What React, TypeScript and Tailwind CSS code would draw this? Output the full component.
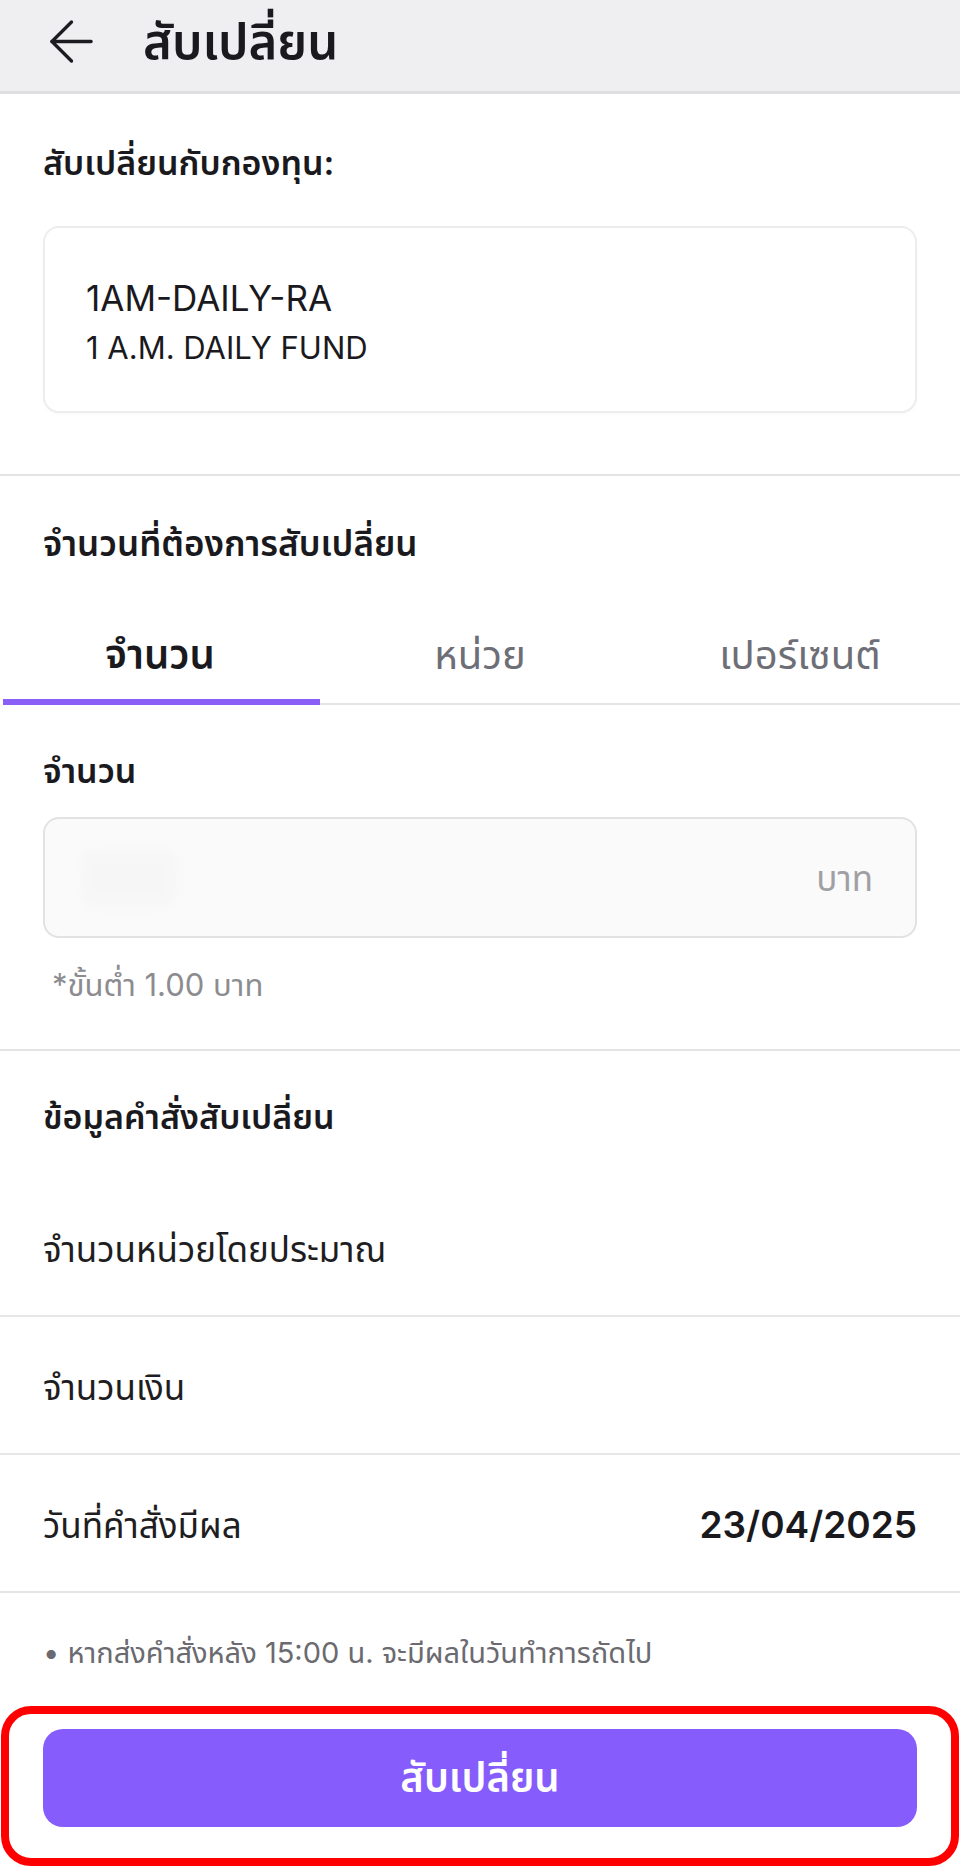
import React from "react";

const FONT = { fontFamily: '"Inter", "Noto Sans Thai", "Noto Sans", "DejaVu Sans", sans-serif' };

function Row({ label, value }: { label: string; value?: string }) {
  return (
    <div className="flex h-[138px] items-center justify-between border-b-2 border-[#e6e6e8] px-[43px] pt-1">
      <span className="text-[35px] leading-[50px] text-[#1e1e22]">{label}</span>
      {value ? (
        <span className="text-[37px] font-semibold leading-[50px] text-[#1a1a1e]">{value}</span>
      ) : null}
    </div>
  );
}

export default function App() {
  const tabs = ["จำนวน", "หน่วย", "เปอร์เซนต์"];
  return (
    <div className="h-[1868px] w-[960px] overflow-hidden bg-white" style={FONT}>
      {/* Header */}
      <div className="flex h-[94px] items-center border-b-[3px] border-[#dfdfe2] bg-[#efeff2] pb-[8px]">
        <svg
          className="ml-[38px] shrink-0"
          width="67"
          height="67"
          viewBox="0 0 24 24"
          fill="none"
          stroke="#1c1c20"
          strokeWidth="1.2"
          strokeLinecap="round"
          strokeLinejoin="round"
        >
          <path d="m12 19-7-7 7-7" />
          <path d="M19 12H5" />
        </svg>
        <h1 className="ml-[38px] text-[49px] font-semibold leading-[60px] text-[#1a1a1e]">สับเปลี่ยน</h1>
      </div>

      {/* Section 1 */}
      <div className="px-[43px]">
        <p className="mt-[44px] text-[34px] font-semibold leading-[50px] text-[#1a1a1e]">สับเปลี่ยนกับกองทุน:</p>
        <div className="mt-[38px] h-[187px] rounded-[16px] border-2 border-[#ededef] bg-white px-[41px] pt-[45px] shadow-[0_1px_3px_rgba(0,0,0,0.03)]">
          <p className="text-[35px] leading-[50px] text-[#1a1a1e]">1AM-DAILY-RA</p>
          <p className="text-[31px] leading-[50px] text-[#1a1a1e]">1 A.M. DAILY FUND</p>
        </div>
        <div className="h-[61px]" />
      </div>
      <div className="h-[2px] bg-[#e4e4e6]" />

      {/* Section 2 */}
      <p className="mt-[42px] px-[43px] text-[35px] font-semibold leading-[50px] text-[#1a1a1e]">
        จำนวนที่ต้องการสับเปลี่ยน
      </p>
      <div className="mt-[42px] grid grid-cols-3">
        {tabs.map((t, i) => (
          <div key={t} className="flex flex-col">
            <div className="flex h-[89px] items-center justify-center">
              <span
                className={
                  i === 0
                    ? "text-[40px] font-semibold leading-[56px] text-[#1a1a1e]"
                    : "text-[40px] leading-[56px] text-[#6e6e76]"
                }
              >
                {t}
              </span>
            </div>
            {i === 0 ? (
              <div className="ml-[3px] h-[6px] bg-[#8a5ff5]" />
            ) : (
              <div className="flex h-[6px] items-end">
                <div className="h-[2px] w-full bg-[#e6e6e8]" />
              </div>
            )}
          </div>
        ))}
      </div>

      <div className="px-[43px]">
        <p className="mt-[41px] text-[34px] font-semibold leading-[50px] text-[#1a1a1e]">จำนวน</p>
        <div className="mt-[21px] flex h-[121px] items-center justify-between rounded-[16px] border-2 border-[#e2e2e4] bg-[#fafafa] pl-[36px] pr-[42px]">
          <div className="h-[56px] w-[96px] rounded-[10px] bg-[#f3f3f3] opacity-50 blur-[6px]" />
          <span className="text-[35px] leading-[50px] text-[#a0a0a4]">บาท</span>
        </div>
        <p className="mt-[27px] pl-[9px] text-[31px] leading-[40px] text-[#8c8c90]">*ขั้นต่ำ 1.00 บาท</p>
      </div>
      <div className="mt-[44px] h-[2px] bg-[#e4e4e6]" />

      {/* Section 3 */}
      <p className="mt-[41px] px-[43px] text-[34px] font-semibold leading-[50px] text-[#1a1a1e]">
        ข้อมูลคำสั่งสับเปลี่ยน
      </p>
      <div className="mt-[37px]">
        <Row label="จำนวนหน่วยโดยประมาณ" />
        <Row label="จำนวนเงิน" />
        <Row label="วันที่คำสั่งมีผล" value="23/04/2025" />
      </div>

      <p className="mt-[40px] px-[43px] text-[29px] leading-[40px] text-[#6a6a70]">
        • หากส่งคำสั่งหลัง 15:00 น. จะมีผลในวันทำการถัดไป
      </p>

      {/* Button with red highlight */}
      <div className="mx-[1px] mt-[33px] h-[160px] rounded-[30px] border-[8px] border-[#ff0000] px-[34px] pt-[15px]">
        <button className="flex h-[98px] w-full items-center justify-center rounded-[20px] bg-[#865cfd]">
          <span className="text-[40px] font-semibold leading-[56px] text-white">สับเปลี่ยน</span>
        </button>
      </div>
    </div>
  );
}
